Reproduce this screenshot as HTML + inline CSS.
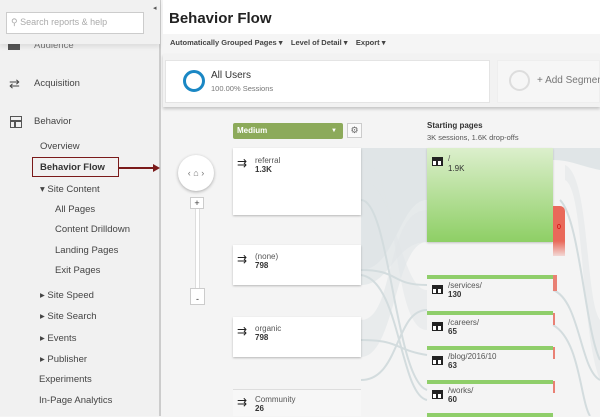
<!DOCTYPE html>
<html><head><meta charset="utf-8"><style>
*{margin:0;padding:0;box-sizing:border-box}
body{width:600px;height:416px;overflow:hidden;background:#f4f4f4;font-family:"Liberation Sans",Arial,sans-serif;position:relative;color:#333}
.a{position:absolute}
.side{left:0;top:0;width:161px;height:416px;background:#f1f1f1;border-right:2px solid #ccc}
.nav{font-size:9.5px;color:#444;position:absolute;white-space:nowrap}
.box{background:#fff;box-shadow:0 1px 2px rgba(0,0,0,.25);position:absolute}
.lbl{font-size:8px;color:#555;position:absolute}
.num{font-size:8px;color:#333;font-weight:bold;position:absolute}
.gb{position:absolute;left:427px;width:126px;height:4px;background:#8fce6a}
.pi{position:absolute;width:11px;height:9px;background:#222;border-top:3px solid #222}
.pi:after{content:"";position:absolute;left:1px;top:1px;width:3px;height:4px;background:#fff;box-shadow:5px 0 0 #fff}
</style></head><body>
<div class="a side"></div>
<div class="nav" style="left:34px;top:40px;color:#777">Audience</div>
<div class="a" style="left:8px;top:44px;width:12px;height:6px;background:#555"></div>
<div class="a" style="left:0;top:0;width:160px;height:44px;background:#f1f1f1;box-shadow:0 3px 4px rgba(0,0,0,.08)"></div>
<div class="a" style="left:6px;top:12px;width:138px;height:22px;background:#fff;border:1px solid #ccc"></div>
<div class="nav" style="left:11px;top:17px;color:#aaa;font-size:9px">&#9906; Search reports &amp; help</div>
<div class="a" style="left:153px;top:4px;font-size:7px;color:#555">◂</div>
<div class="nav" style="left:9px;top:76px;font-size:13px;color:#444">⇄</div>
<div class="nav" style="left:34px;top:78px">Acquisition</div>
<div class="a" style="left:10px;top:116px;width:12px;height:12px;border:1.5px solid #555"></div>
<div class="a" style="left:10px;top:120px;width:12px;height:1.5px;background:#555"></div>
<div class="a" style="left:14px;top:120px;width:1.5px;height:8px;background:#555"></div>
<div class="nav" style="left:34px;top:116px">Behavior</div>
<div class="nav" style="left:40px;top:141px">Overview</div>
<div class="a" style="left:32px;top:157px;width:87px;height:20px;border:1.5px solid #7a1a1a"></div>
<div class="nav" style="left:40px;top:162px;font-weight:bold;color:#333">Behavior Flow</div>
<div class="a" style="left:119px;top:167px;width:36px;height:1.5px;background:#7a1a1a"></div>
<div class="a" style="left:153px;top:164px;border-left:7px solid #7a1a1a;border-top:4px solid transparent;border-bottom:4px solid transparent"></div>
<div class="nav" style="left:40px;top:184px">▾ Site Content</div>
<div class="nav" style="left:55px;top:204px">All Pages</div>
<div class="nav" style="left:55px;top:224px">Content Drilldown</div>
<div class="nav" style="left:55px;top:245px">Landing Pages</div>
<div class="nav" style="left:55px;top:265px">Exit Pages</div>
<div class="nav" style="left:40px;top:290px">▸ Site Speed</div>
<div class="nav" style="left:40px;top:311px">▸ Site Search</div>
<div class="nav" style="left:40px;top:333px">▸ Events</div>
<div class="nav" style="left:40px;top:354px">▸ Publisher</div>
<div class="nav" style="left:39px;top:374px">Experiments</div>
<div class="nav" style="left:39px;top:395px">In-Page Analytics</div>

<div class="a" style="left:163px;top:0;width:437px;height:34px;background:#fff"></div>
<div class="a" style="left:169px;top:10px;font-size:15px;font-weight:bold;color:#222">Behavior Flow</div>
<div class="a" style="left:163px;top:34px;width:437px;height:20px;background:#f5f5f5"></div>
<div class="a" style="left:170px;top:38px;font-size:7.5px;font-weight:bold;color:#444;white-space:pre">Automatically Grouped Pages ▾    Level of Detail ▾    Export ▾</div>
<div class="a" style="left:163px;top:54px;width:437px;height:53px;background:#f2f2f2;box-shadow:0 2px 3px rgba(0,0,0,.2)"></div>
<div class="a" style="left:165px;top:60px;width:325px;height:43px;background:#fff;border:1px solid #e4e4e4"></div>
<div class="a" style="left:183px;top:70px;width:22px;height:22px;border-radius:50%;border:3.5px solid #1a87c4"></div>
<div class="a" style="left:211px;top:70px;font-size:10px;color:#333">All Users</div>
<div class="a" style="left:211px;top:84px;font-size:7.5px;color:#777">100.00% Sessions</div>
<div class="a" style="left:497px;top:60px;width:103px;height:43px;background:#f6f6f6;border:1px solid #eee"></div>
<div class="a" style="left:509px;top:70px;width:21px;height:21px;border-radius:50%;border:2.5px solid #ddd"></div>
<div class="a" style="left:537px;top:75px;font-size:10px;color:#777;white-space:nowrap">+ Add Segment</div>

<svg class="a" style="left:0;top:0" width="600" height="416">
<g fill="#d8e0e2" opacity=".7">
<path d="M361 148 H427 V200 C400 200 395 270 361 270 Z"/>
<path d="M361 160 C400 160 390 330 427 330 V290 C400 290 395 180 361 180Z" opacity=".5"/>
<path d="M361 250 C390 250 385 200 427 200 V242 C395 242 390 285 361 285Z" opacity=".7"/>
<path d="M361 320 C395 320 385 210 427 210 V242 C395 242 395 357 361 357Z" opacity=".6"/>
<path d="M553 148 H600 V170 C580 166 570 160 553 160Z"/>
<path d="M565 165 C590 175 585 300 600 320 V380 C580 330 585 190 565 180Z" opacity=".5"/>
</g>
<g fill="none" stroke="#d3dcde" stroke-width="2">
<path d="M361 270 C400 270 390 285 427 285"/>
<path d="M361 275 C400 280 400 395 427 400"/>
<path d="M361 380 C400 380 395 310 427 310"/>
<path d="M361 340 C400 340 395 350 427 355"/>
<path d="M361 200 C390 200 395 380 427 390"/>
<path d="M553 290 C580 300 580 370 600 380"/>
<path d="M553 325 C580 340 580 400 590 416"/>
<path d="M560 200 C580 220 585 330 600 360"/>
</g>
</svg>

<div class="a" style="left:233px;top:123px;width:110px;height:16px;background:#8caa5a;border-radius:2px"></div>
<div class="a" style="left:237px;top:126px;font-size:8px;font-weight:bold;color:#fff">Medium</div>
<div class="a" style="left:331px;top:128px;font-size:6px;color:#fff">▼</div>
<div class="a" style="left:347px;top:123px;width:15px;height:15px;background:#fafafa;border:1px solid #ccc;font-size:9px;color:#666;text-align:center;line-height:13px">⚙</div>
<div class="a" style="left:427px;top:121px;font-size:8px;font-weight:bold;color:#333">Starting pages</div>
<div class="a" style="left:427px;top:133px;font-size:7.5px;color:#555">3K sessions, 1.6K drop-offs</div>

<div class="a" style="left:178px;top:155px;width:36px;height:36px;border-radius:50%;background:#fff;box-shadow:0 1px 3px rgba(0,0,0,.3);font-size:9px;color:#777;text-align:center;line-height:36px">‹ ⌂ ›</div>
<div class="a" style="left:195px;top:205px;width:5px;height:85px;background:#fff;border:1px solid #ddd"></div>
<div class="a" style="left:190px;top:197px;width:14px;height:12px;background:#fff;border:1px solid #ccc;font-size:9px;text-align:center;line-height:10px">+</div>
<div class="a" style="left:190px;top:288px;width:15px;height:17px;background:#fff;border:1px solid #ccc;font-size:9px;text-align:center;line-height:20px">-</div>

<div class="box" style="left:233px;top:148px;width:128px;height:67px"></div>
<div class="box" style="left:233px;top:245px;width:128px;height:40px"></div>
<div class="box" style="left:233px;top:317px;width:128px;height:40px"></div>
<div class="a" style="left:233px;top:389px;width:128px;height:27px;background:#f7f7f7;border-top:1px solid #ddd"></div>
<div class="lbl" style="left:237px;top:156px;font-size:12px;color:#222">⇉</div>
<div class="lbl" style="left:255px;top:156px">referral</div><div class="num" style="left:255px;top:165px">1.3K</div>
<div class="lbl" style="left:237px;top:252px;font-size:12px;color:#222">⇉</div>
<div class="lbl" style="left:255px;top:252px">(none)</div><div class="num" style="left:255px;top:261px">798</div>
<div class="lbl" style="left:237px;top:324px;font-size:12px;color:#222">⇉</div>
<div class="lbl" style="left:255px;top:324px">organic</div><div class="num" style="left:255px;top:333px">798</div>
<div class="lbl" style="left:237px;top:395px;font-size:12px;color:#222">⇉</div>
<div class="lbl" style="left:255px;top:395px">Community</div><div class="num" style="left:255px;top:404px">26</div>

<div class="a" style="left:427px;top:148px;width:126px;height:94px;background:linear-gradient(#dcefcc,#8ecf65);box-shadow:0 1px 2px rgba(0,0,0,.2)"></div>
<div class="a" style="left:553px;top:206px;width:12px;height:50px;background:linear-gradient(#e9695a 70%,rgba(233,105,90,.2));border-radius:0 5px 0 0"></div>
<div class="a" style="left:557px;top:224px;font-size:7px;color:#c00">0</div>
<div class="pi" style="left:432px;top:157px"></div>
<div class="lbl" style="left:448px;top:154px">/</div><div class="num" style="left:448px;top:164px;font-weight:normal">1.9K</div>

<div class="gb" style="top:275px"></div><div class="a" style="left:553px;top:275px;width:4px;height:16px;background:#e98074"></div>
<div class="pi" style="left:432px;top:285px"></div>
<div class="lbl" style="left:448px;top:281px">/services/</div><div class="num" style="left:448px;top:290px">130</div>
<div class="gb" style="top:311px"></div><div class="a" style="left:553px;top:313px;width:2px;height:12px;background:#e98074"></div>
<div class="pi" style="left:432px;top:322px"></div>
<div class="lbl" style="left:448px;top:318px">/careers/</div><div class="num" style="left:448px;top:327px">65</div>
<div class="gb" style="top:346px"></div><div class="a" style="left:553px;top:347px;width:2px;height:12px;background:#e98074"></div>
<div class="pi" style="left:432px;top:356px"></div>
<div class="lbl" style="left:448px;top:352px">/blog/2016/10</div><div class="num" style="left:448px;top:361px">63</div>
<div class="gb" style="top:380px"></div><div class="a" style="left:553px;top:381px;width:2px;height:12px;background:#e98074"></div>
<div class="pi" style="left:432px;top:390px"></div>
<div class="lbl" style="left:448px;top:386px">/works/</div><div class="num" style="left:448px;top:395px">60</div>
<div class="gb" style="top:413px"></div>
</body></html>
